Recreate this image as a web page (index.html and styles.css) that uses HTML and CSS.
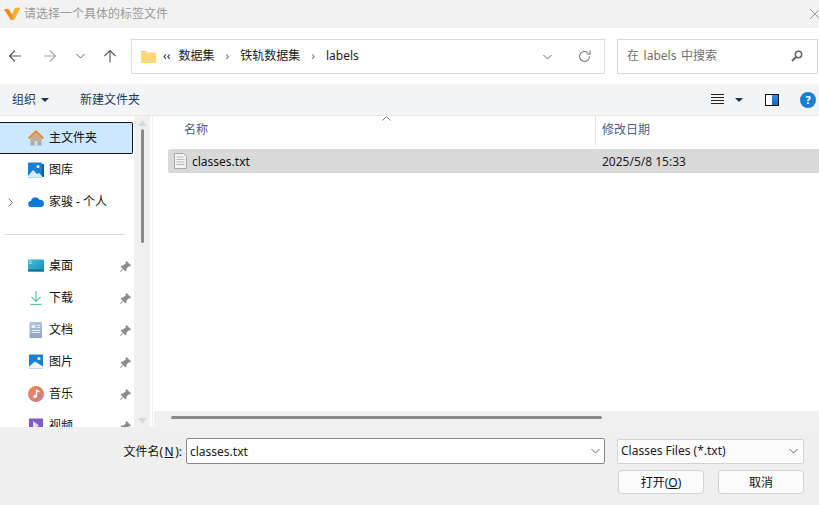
FILE: index.html
```html
<!DOCTYPE html>
<html lang="zh-CN">
<head>
<meta charset="utf-8">
<title>请选择一个具体的标签文件</title>
<link rel="stylesheet" href="styles.css">
</head>
<body>
<div class="dialog">
  <header class="titlebar">
    <svg class="app-logo" width="16" height="14" viewBox="0 0 16 14"><path d="M0 2.500c2-1 4-1 5 0l3 5 3-6c1-1 3-1 5-.5L10 13H7z" fill="#f58a1f"/><path d="M8 7.500l3-6c1-1 3-1 5-.5L10 13H8.500z" fill="#fbb02d"/></svg>
    <span class="title-text">请选择一个具体的标签文件</span>
    <svg class="close" width="10" height="10" viewBox="0 0 10 10"><path d="M0 0l10 10M10 0L0 10" stroke="#9a9a9a" fill="none"/></svg>
  </header>

  <nav class="navbar">
    <div class="nav-buttons">
      <svg width="14" height="14" viewBox="0 0 14 14"><path d="M13 7H1.500M7 1.500L1.500 7 7 12.500" stroke="#555" stroke-width="1.100" fill="none"/></svg>
      <svg class="gap-fwd" width="14" height="14" viewBox="0 0 14 14"><path d="M1 7h11.500M7 1.500L12.500 7 7 12.500" stroke="#a6a6a6" stroke-width="1.100" fill="none"/></svg>
      <svg class="gap-drop" width="9" height="6" viewBox="0 0 9 6"><path d="M.5 1l4 4 4-4" stroke="#666" fill="none"/></svg>
      <svg class="gap-up" width="14" height="14" viewBox="0 0 14 14"><path d="M7 13.500V1.500M1.500 7L7 1.500 12.500 7" stroke="#555" stroke-width="1.100" fill="none"/></svg>
    </div>
    <div class="address">
      <svg class="folder" width="15" height="12" viewBox="0 0 15 12"><path d="M0 1a1 1 0 0 1 1-1h4l1.500 1.500H0z" fill="#f4c75a"/><rect y="1.500" width="15" height="10.500" rx="1" fill="#fbd77c"/></svg>
      <span class="crumb-more">‹‹</span>
      <span>数据集</span><span class="sep">›</span>
      <span>铁轨数据集</span><span class="sep">›</span>
      <span>labels</span>
      <svg class="addr-drop" width="9" height="6" viewBox="0 0 9 6"><path d="M.5 1l4 4 4-4" stroke="#666" fill="none"/></svg>
      <svg class="refresh" width="13" height="13" viewBox="0 0 13 13"><path d="M11.500 6.500A5 5 0 1 1 9.800 2.700" stroke="#777" stroke-width="1.100" fill="none"/><path d="M12 .5v3.500H8.500" stroke="#777" stroke-width="1.100" fill="none"/></svg>
    </div>
    <div class="search">
      <span class="search-text">在 labels 中搜索</span>
      <svg width="12" height="12" viewBox="0 0 12 12"><circle cx="7.500" cy="4.500" r="3.200" stroke="#666" stroke-width="1.500" fill="none"/><path d="M5 7l-4 4" stroke="#666" stroke-width="2"/></svg>
    </div>
  </nav>

  <div class="toolbar">
    <span class="tool-item">组织</span><i class="caret"></i>
    <span class="tool-item tool-new">新建文件夹</span>
    <div class="tool-right">
      <svg width="13" height="11" viewBox="0 0 13 11"><path d="M0 .5h13M0 3.500h13M0 6.500h13M0 9.500h13" stroke="#222"/></svg>
      <i class="caret view-caret"></i>
      <span class="pane-icon"><b></b></span>
      <span class="help">?</span>
    </div>
  </div>

  <main class="main">
    <aside class="sidebar">
      <div class="tree">
        <div class="tree-item selected">
          <svg class="ico" viewBox="0 0 16 16"><defs><linearGradient id="hb" x1="0" y1="0" x2="0" y2="1"><stop offset="0" stop-color="#d9b08c"/><stop offset="1" stop-color="#a9a9a9"/></linearGradient></defs><path d="M2.500 8v7.500h11V8L8 3z" fill="url(#hb)"/><path d="M6.500 15.500V11h3v4.500z" fill="#cfe0ee"/><path d="M.7 8.500L8 1.500l7.300 7" stroke="#e8873a" stroke-width="2" fill="none"/></svg>
          <span>主文件夹</span>
        </div>
        <div class="tree-item">
          <svg class="ico" viewBox="0 0 16 16"><rect y=".5" width="14" height="15" rx="1" fill="#1a7fd4"/><rect x="14" y="2" width="2" height="13" fill="#0e5fa8"/><circle cx="10" cy="4.500" r="1.500" fill="#fff"/><path d="M0 14l5-6 4 4 2-1 3 3v1.500H0z" fill="#dce9f6"/></svg>
          <span>图库</span>
        </div>
        <div class="tree-item">
          <svg class="chev" width="5" height="9" viewBox="0 0 5 9"><path d="M.5.500l4 4-4 4" stroke="#777" fill="none"/></svg>
          <svg class="ico" viewBox="0 0 16 16"><path d="M3.500 13a3 3 0 0 1-.5-6 4.500 4.500 0 0 1 8.500-1.200A3.700 3.700 0 0 1 16 10c0 2-1.500 3-3 3z" fill="#0f78d4"/></svg>
          <span>家骏 - 个人</span>
        </div>
        <hr class="divider">
        <div class="tree-item">
          <svg class="ico" viewBox="0 0 16 16"><defs><linearGradient id="db" x1="0" y1="0" x2="1" y2="1"><stop offset="0" stop-color="#45c3d8"/><stop offset="1" stop-color="#1b86bb"/></linearGradient></defs><rect y="1.500" width="16" height="12" rx="1" fill="url(#db)"/><rect y="11.500" width="16" height="2" fill="#1a6f99"/><path d="M1.500 3.500h2M1.500 5.500h2" stroke="#bdeaf2"/></svg>
          <span>桌面</span>
          <svg class="pin" viewBox="0 0 10 10"><path d="M6 0l4 4-1 1-1-.2L5.800 7l.2 1.500-1 1L3 7.500.5 10 0 9.500 2.500 7 .5 5l1-1L3 4.200 5.200 2 5 1z" fill="#8d8d8d"/></svg>
        </div>
        <div class="tree-item">
          <svg class="ico" viewBox="0 0 16 16"><path d="M8 1v10M3.500 7L8 11.500 12.500 7" stroke="#5cc7a8" stroke-width="1.200" fill="none"/><path d="M2.500 14.500h11" stroke="#5cc7a8" stroke-width="1.300"/></svg>
          <span>下载</span>
          <svg class="pin" viewBox="0 0 10 10"><path d="M6 0l4 4-1 1-1-.2L5.800 7l.2 1.500-1 1L3 7.500.5 10 0 9.500 2.500 7 .5 5l1-1L3 4.200 5.200 2 5 1z" fill="#8d8d8d"/></svg>
        </div>
        <div class="tree-item">
          <svg class="ico" viewBox="0 0 16 16"><defs><linearGradient id="dc" x1="0" y1="0" x2="0" y2="1"><stop offset="0" stop-color="#b3c4da"/><stop offset="1" stop-color="#8ea4c2"/></linearGradient></defs><rect x="1.500" y="0" width="12.500" height="16" rx="1" fill="url(#dc)"/><path d="M3.500 3h4v3h-4z" fill="#e6ecf3"/><path d="M9 3.500h3M9 5.500h3M3.500 8.500h8.500M3.500 10.500h8.500" stroke="#e6ecf3"/></svg>
          <span>文档</span>
          <svg class="pin" viewBox="0 0 10 10"><path d="M6 0l4 4-1 1-1-.2L5.800 7l.2 1.500-1 1L3 7.500.5 10 0 9.500 2.500 7 .5 5l1-1L3 4.200 5.200 2 5 1z" fill="#8d8d8d"/></svg>
        </div>
        <div class="tree-item">
          <svg class="ico" viewBox="0 0 16 16"><rect x="1" y=".5" width="14" height="14" fill="#1a7fd4"/><circle cx="11" cy="4.500" r="1.500" fill="#fff"/><path d="M1 14.500v-2l6-5 8 5v2z" fill="#eef4fa"/></svg>
          <span>图片</span>
          <svg class="pin" viewBox="0 0 10 10"><path d="M6 0l4 4-1 1-1-.2L5.800 7l.2 1.500-1 1L3 7.500.5 10 0 9.500 2.500 7 .5 5l1-1L3 4.200 5.200 2 5 1z" fill="#8d8d8d"/></svg>
        </div>
        <div class="tree-item">
          <svg class="ico" viewBox="0 0 16 16"><defs><linearGradient id="mu" x1="0" y1="0" x2="1" y2="1"><stop offset="0" stop-color="#ee8a4e"/><stop offset="1" stop-color="#c97a96"/></linearGradient></defs><circle cx="8" cy="8" r="8" fill="url(#mu)"/><path d="M8.500 3.500v7" stroke="#fff" stroke-width="1.300"/><circle cx="7" cy="10.500" r="1.700" fill="#fff"/><path d="M8.500 3.500l3 1.500v1.500l-3-1.200z" fill="#fff"/></svg>
          <span>音乐</span>
          <svg class="pin" viewBox="0 0 10 10"><path d="M6 0l4 4-1 1-1-.2L5.800 7l.2 1.500-1 1L3 7.500.5 10 0 9.500 2.500 7 .5 5l1-1L3 4.200 5.200 2 5 1z" fill="#8d8d8d"/></svg>
        </div>
        <div class="tree-item">
          <svg class="ico" viewBox="0 0 16 16"><rect x="1" y=".5" width="14" height="15" fill="#7a5bc9"/><path d="M5 3v9l6-4.500z" fill="#e6dcf9"/></svg>
          <span>视频</span>
          <svg class="pin" viewBox="0 0 10 10"><path d="M6 0l4 4-1 1-1-.2L5.800 7l.2 1.500-1 1L3 7.500.5 10 0 9.500 2.500 7 .5 5l1-1L3 4.200 5.200 2 5 1z" fill="#8d8d8d"/></svg>
        </div>
      </div>
      <div class="vscroll">
        <svg width="9" height="6" viewBox="0 0 9 6"><path d="M0 6L4.500 0 9 6z" fill="#dadada"/></svg>
        <div class="vthumb"></div>
        <svg width="9" height="6" viewBox="0 0 9 6"><path d="M0 0l4.500 6L9 0z" fill="#dadada"/></svg>
      </div>
    </aside>

    <section class="files">
      <div class="col-head">
        <span class="col-name">名称<svg class="sort" width="9" height="5" viewBox="0 0 9 5"><path d="M.5 4.500l4-4 4 4" stroke="#777" fill="none"/></svg></span>
        <span class="col-date">修改日期</span>
      </div>
      <div class="file-row">
        <span class="file-name">
          <svg width="13" height="16" viewBox="0 0 13 16"><path d="M.5.500h9l3 3v12H.500z" fill="#f3f3f3" stroke="#a8a8a8"/><path d="M2.500 4h7M2.500 6.500h8M2.500 9h8M2.500 11.500h8" stroke="#b8b8b8"/></svg>
          <span class="lowered">classes.txt</span>
        </span>
        <span class="file-date lowered">2025/5/8 15:33</span>
      </div>
      <div class="file-space"></div>
      <div class="hscroll"><div class="hthumb"></div></div>
    </section>
  </main>

  <footer class="footer">
    <div class="name-row">
      <label class="name-label lowered">文件名(<u>N</u>):</label>
      <div class="name-input"><span class="lowered">classes.txt</span><svg width="9" height="6" viewBox="0 0 9 6"><path d="M.5 1l4 4 4-4" stroke="#666" fill="none"/></svg></div>
      <div class="type-select"><span>Classes Files (*.txt)</span><svg width="9" height="6" viewBox="0 0 9 6"><path d="M.5 1l4 4 4-4" stroke="#666" fill="none"/></svg></div>
    </div>
    <div class="btn-row">
      <button class="btn">打开(<u>O</u>)</button>
      <button class="btn btn-cancel">取消</button>
    </div>
  </footer>
</div>
</body>
</html>
```
FILE: styles.css
```css
* { box-sizing: border-box; }
html, body { margin: 0; padding: 0; height: 100%; overflow: hidden; }
body { font-family: "Noto Sans", "Noto Sans CJK SC", sans-serif; font-size: 12px; line-height: 16px; color: #1a1a1a; background: #fff; }
.dialog { width: 819px; height: 505px; display: flex; flex-direction: column; overflow: hidden; }
.lowered { position: relative; top: 1px; }

.titlebar { height: 28px; background: #f2f2f2; display: flex; align-items: center; padding-left: 4px; color: #9a9a9a; }
.app-logo { margin-right: 4px; flex: none; }
.close { margin-left: auto; margin-right: -1px; }

.navbar { height: 56px; background: #fff; display: flex; align-items: center; }
.nav-buttons { display: flex; align-items: center; width: 131px; padding-left: 8px; flex: none; }
.gap-fwd { margin-left: 21px; }
.gap-drop { margin-left: 19px; }
.gap-up { margin-left: 18px; }
.address { width: 474px; height: 35px; border: 1px solid #d9d9d9; display: flex; align-items: center; padding: 0 0 1px 9px; flex: none; }
.address > svg { position: relative; top: 1px; }
.folder { margin-right: 7px; flex: none; }
.crumb-more { margin-right: 8px; }
.sep { margin: 0 11px; color: #666; }
.addr-drop { margin-left: auto; }
.refresh { margin-left: 26px; margin-right: 13px; }
.search { width: 201px; height: 35px; margin-left: 12px; border: 1px solid #d9d9d9; display: flex; align-items: center; justify-content: space-between; padding: 0 14px 1px 9px; color: #6f6f6f; flex: none; }
.search-text { word-spacing: 1.500px; }

.toolbar { height: 32px; background: #f3f4f6; border-bottom: 1px solid #e6e6e6; display: flex; align-items: center; padding-left: 12px; color: #1e3a5f; }
.caret { width: 0; height: 0; border-left: 4px solid transparent; border-right: 4px solid transparent; border-top: 4px solid #1e3050; margin-left: 5px; }
.tool-new { margin-left: 31px; }
.tool-right { margin-left: auto; display: flex; align-items: center; padding-right: 3px; }
.view-caret { margin-left: 11px; }
.pane-icon { width: 14px; height: 12px; border: 1px solid #111; margin-left: 22px; display: block; background: #fff; }
.pane-icon b { display: block; width: 6px; height: 10px; margin-left: 6px; background: linear-gradient(#2b8fe0, #1568b5); }
.help { width: 16px; height: 16px; border-radius: 50%; background: #1a7fd0; color: #fff; font-size: 11px; font-weight: bold; text-align: center; line-height: 16px; margin-left: 21px; }

.main { height: 311px; display: flex; background: #fff; flex: none; }
.sidebar { width: 153px; display: flex; flex: none; padding-right: 2px; border-right: 1px solid #f0f0f0; }
.tree { width: 134px; padding-top: 6px; overflow: hidden; flex: none; }
.tree-item { height: 32px; display: flex; align-items: center; padding-left: 28px; position: relative; color: #111; }
.tree-item.selected { background: #cce8ff; border: 1px solid #111; border-left: 0; border-radius: 0 2px 2px 0; margin-right: 1px; }
.ico { width: 16px; height: 16px; margin-right: 5px; flex: none; }
.chev { position: absolute; left: 8px; top: 12px; }
.pin { width: 11px; height: 11px; margin-left: auto; margin-right: 3px; }
.divider { border: 0; border-top: 1px solid #d9d9d9; margin: 16px 9px 15px 4px; }
.vscroll { width: 16px; background: #f0f0f0; display: flex; flex-direction: column; align-items: center; padding: 4px 0 3px; }
.vthumb { width: 3px; height: 114px; margin-top: 3px; margin-bottom: auto; background: #8a8a8a; border-radius: 2px; }

.files { flex: 1; display: flex; flex-direction: column; min-width: 0; }
.col-head { height: 33px; display: flex; color: #4c607a; padding-bottom: 4px; flex: none; }
.col-name { width: 443px; padding: 6px 0 0 31px; border-right: 1px solid #e3e3e3; position: relative; }
.sort { position: absolute; left: 229px; top: 0; }
.col-date { padding: 6px 0 0 6px; }
.file-row { height: 24px; background: #d9d9d9; margin-left: 15px; display: flex; align-items: center; border-radius: 2px 0 0 2px; flex: none; }
.file-name { width: 428px; display: flex; align-items: center; gap: 5px; padding-left: 6px; color: #111; }
.file-date { color: #222; padding-left: 6px; }
.file-space { flex: 1; }
.hscroll { height: 16px; background: #f0f0f0; padding: 5px 0 0 17px; margin-left: 1px; flex: none; }
.hthumb { width: 431px; height: 3px; background: #8a8a8a; border-radius: 2px; }

.footer { flex: 1; background: #efefef; padding-top: 11px; }
.name-row { display: flex; align-items: center; height: 26px; }
.name-label { width: 186px; text-align: right; padding-right: 4px; color: #111; flex: none; }
.name-label u { padding: 0 1.500px; }
.name-input { width: 419px; height: 26px; background: #fff; border: 1px solid #8a8a8a; border-radius: 2px; display: flex; align-items: center; justify-content: space-between; padding: 0 4px 0 3px; }
.type-select { width: 187px; height: 25px; margin-left: 12px; background: #fbfbfb; border: 1px solid #d2d2d2; border-radius: 2px; display: flex; align-items: center; justify-content: space-between; padding: 0 5px 0 3px; }
.btn-row { display: flex; justify-content: flex-end; margin-top: 6px; padding-right: 15px; }
.btn { width: 86px; height: 24px; background: #fbfbfb; border: 1px solid #d2d2d2; border-radius: 4px; font-family: inherit; font-size: 12px; color: #111; padding: 0; }
.btn-cancel { margin-left: 14px; }
```
